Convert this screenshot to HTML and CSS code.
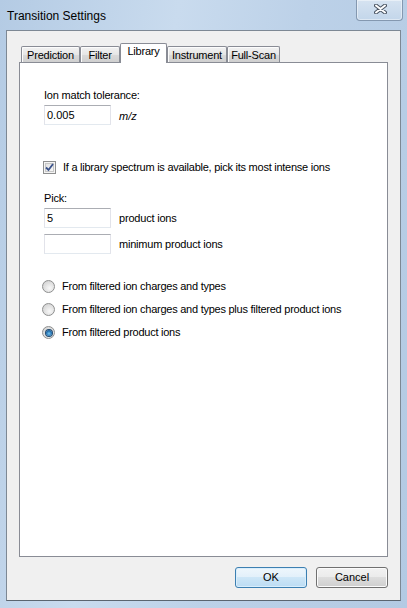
FILE: index.html
```html
<!DOCTYPE html>
<html>
<head>
<meta charset="utf-8">
<link rel="stylesheet" href="styles.css">
</head>
<body>
<div class="window">
  <div class="titlebar">
    <span class="title">Transition Settings</span>
    <div class="close">
      <svg width="13" height="10" viewBox="0 0 13 10">
        <path d="M2 1.5 L11 8.5 M11 1.5 L2 8.5" stroke="#4b5563" stroke-width="4" stroke-linecap="round"/>
        <path d="M2 1.5 L11 8.5 M11 1.5 L2 8.5" stroke="#ffffff" stroke-width="2" stroke-linecap="round"/>
      </svg>
    </div>
  </div>
  <div class="client">
    <div class="tabcontrol">
      <div class="tabstrip">
        <div class="tab t-pred">Prediction</div>
        <div class="tab t-filter">Filter</div>
        <div class="tab t-lib selected">Library</div>
        <div class="tab t-inst">Instrument</div>
        <div class="tab t-full">Full-Scan</div>
      </div>
      <div class="page">
        <div class="label first">Ion match tolerance:</div>
        <div class="row">
          <div class="textbox">0.005</div>
          <span class="unit">m/z</span>
        </div>
        <div class="checkrow">
          <span class="checkbox">
            <svg width="9" height="9" viewBox="0 0 9 9"><path d="M1 4.5 L3.5 7 L8 1" fill="none" stroke="#3a528a" stroke-width="1.8"/></svg>
          </span>
          <span class="text">If a library spectrum is available, pick its most intense ions</span>
        </div>
        <div class="label pick">Pick:</div>
        <div class="row">
          <div class="textbox">5</div>
          <span class="side">product ions</span>
        </div>
        <div class="row row2">
          <div class="textbox"></div>
          <span class="side">minimum product ions</span>
        </div>
        <div class="radios">
          <div class="radiorow"><span class="radio"></span><span class="text">From filtered ion charges and types</span></div>
          <div class="radiorow"><span class="radio"></span><span class="text">From filtered ion charges and types plus filtered product ions</span></div>
          <div class="radiorow"><span class="radio on"><span class="dot"></span></span><span class="text">From filtered product ions</span></div>
        </div>
      </div>
    </div>
    <div class="buttons">
      <div class="btn default">OK</div>
      <div class="btn">Cancel</div>
    </div>
  </div>
</div>
</body>
</html>
```
FILE: styles.css
```css
* { box-sizing: border-box; }
html, body { margin: 0; padding: 0; }
body {
  width: 407px;
  height: 608px;
  overflow: hidden;
  font-family: "Liberation Sans", Arial, sans-serif;
  font-size: 11px;
  color: #000;
}
.window {
  width: 407px;
  height: 608px;
  display: flex;
  flex-direction: column;
  background: linear-gradient(100deg, #b4cbe4 0%, #c9dbee 35%, #bcd1e8 60%, #b3cae3 100%);
}
.titlebar {
  height: 30px;
  display: flex;
  justify-content: space-between;
  align-items: flex-start;
}
.title {
  font-size: 12px;
  padding-left: 7px;
  line-height: 14px;
  margin-top: 9px;
}
.close {
  width: 47px;
  height: 21px;
  margin-right: 4px;
  border: 1px solid #8498b0;
  border-top: none;
  border-radius: 0 0 4px 4px;
  background: linear-gradient(#d6e3f1, #c3d6ea);
  box-shadow: inset 0 0 0 1px rgba(255,255,255,0.45);
  display: flex;
  align-items: center;
  justify-content: center;
  padding-left: 2px;
  padding-bottom: 2px;
}
.client {
  flex: 1;
  margin: 0 6px 7px 6px;
  border: 1px solid #7d8894;
  border-bottom-color: #5b6570;
  background: #f0f0f0;
  display: flex;
  flex-direction: column;
  padding: 12px 0 0 12px;
}
.tabcontrol {
  width: 369px;
  display: flex;
  flex-direction: column;
}
.tabstrip {
  height: 19px;
  display: flex;
  align-items: flex-end;
  padding-left: 2px;
  position: relative;
  z-index: 2;
}
.tab {
  height: 16px;
  border: 1px solid #898c95;
  border-bottom: none;
  border-radius: 2px 2px 0 0;
  background: linear-gradient(#f2f2f2, #e6e6e6 50%, #dadada 51%, #cfcfcf);
  box-shadow: inset 1px 1px 0 #fcfcfc;
  text-align: center;
  line-height: 15px;
  padding-top: 1px;
  letter-spacing: -0.2px;
}
.t-pred { width: 59px; }
.t-filter { width: 40px; }
.t-lib { width: 47px; }
.t-inst { width: 60px; }
.t-full { width: 53px; }
.tab.selected {
  height: 20px;
  margin-bottom: -1px;
  background: #fff;
  box-shadow: none;
  line-height: 14px;
  padding-top: 0;
}
.page {
  height: 495px;
  background: #fff;
  border: 1px solid #898c95;
  padding-left: 24px;
  display: flex;
  flex-direction: column;
  align-items: flex-start;
}
.label {
  line-height: 13px;
  letter-spacing: -0.2px;
}
.label.first { margin-top: 26px; }
.row {
  display: flex;
  align-items: center;
  margin-top: 3px;
}
.textbox {
  width: 67px;
  height: 20px;
  border: 1px solid #e2e3ea;
  border-top-color: #abadb3;
  border-bottom-color: #e3e9ef;
  background: #fff;
  padding-left: 2px;
  line-height: 18px;
}
.unit {
  font-style: italic;
  margin-left: 8px;
  padding-top: 1px;
}
.checkrow {
  display: flex;
  align-items: center;
  margin-top: 36px;
  margin-left: -1px;
}
.checkbox {
  width: 13px;
  height: 13px;
  border: 1px solid #8e8f8f;
  background: linear-gradient(135deg, #dcdcdc, #fdfdfd);
  box-shadow: inset 0 0 0 1px #f4f4f4, inset 0 0 0 2px #c7c7c7;
  display: flex;
  align-items: center;
  justify-content: center;
}
.text {
  margin-left: 7px;
  letter-spacing: -0.25px;
  line-height: 13px;
}
.label.pick { margin-top: 18px; }
.side {
  margin-left: 8px;
  letter-spacing: -0.2px;
}
.row2 { margin-top: 6px; }
.radios {
  margin-top: 26px;
  margin-left: -2px;
  display: flex;
  flex-direction: column;
  gap: 10px;
}
.radiorow {
  display: flex;
  align-items: center;
  height: 13px;
}
.radio {
  width: 13px;
  height: 13px;
  border-radius: 50%;
  border: 1px solid #8e8f8f;
  background: radial-gradient(circle at 60% 65%, #f8f8f8, #d4d4d4 80%);
  display: flex;
  align-items: center;
  justify-content: center;
}
.radio .dot {
  width: 6px;
  height: 6px;
  border-radius: 50%;
  background: radial-gradient(circle at 50% 60%, #7cc8f0 0%, #1f6fb0 55%, #0d3f70 100%);
  box-shadow: 0 0 0 1px #234a6e;
}
.buttons {
  display: flex;
  justify-content: flex-end;
  gap: 9px;
  margin-top: 10px;
  padding-right: 12px;
}
.btn {
  width: 72px;
  height: 21px;
  border: 1px solid #707070;
  border-radius: 3px;
  background: linear-gradient(#f2f2f2, #ebebeb 49%, #dddddd 50%, #cfcfcf);
  box-shadow: inset 0 0 0 1px #fbfbfb;
  text-align: center;
  line-height: 19px;
}
.btn.default {
  border-color: #3c7fb1;
  background: linear-gradient(#eef6fc, #e2f0fa 49%, #cde6f7 50%, #bcdcf3);
  box-shadow: inset 0 0 0 1px #d9eefc;
}
```
